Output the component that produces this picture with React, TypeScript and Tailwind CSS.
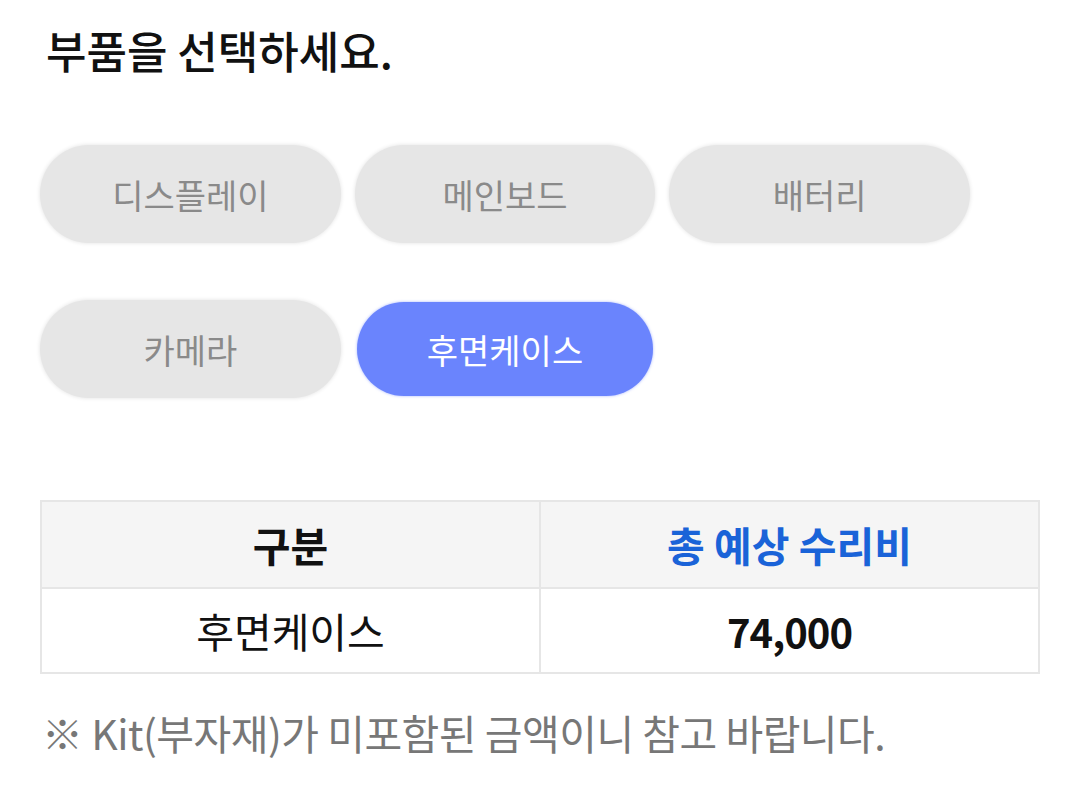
import React, { useState } from "react";

const parts = ["디스플레이", "메인보드", "배터리", "카메라", "후면케이스"];

const prices: Record<string, string> = {
    디스플레이: "312,000",
    메인보드: "450,000",
    배터리: "98,000",
    카메라: "136,000",
    후면케이스: "74,000",
};

const App: React.FC = () => {
    const [selected, setSelected] = useState<string>("후면케이스");

    return (
        <div className="min-h-screen w-full bg-white px-[40px] pt-[22px] font-['Noto_Sans_CJK_KR',sans-serif]">
            {/* Title */}
            <h1 className="pl-[6px] text-[44px] font-medium leading-[56px] text-[#111]">부품을 선택하세요.</h1>

            {/* Part buttons */}
            <div className="mt-[67px] grid w-[930px] grid-cols-3 gap-x-[14px] gap-y-[57px]">
                {parts.map((p) => {
                    const active = p === selected;
                    return (
                        <button
                            key={p}
                            onClick={() => setSelected(p)}
                            className={`flex items-center justify-center rounded-full text-[34px] ${
                                active
                                    ? "mx-[2px] my-[2px] h-[94px] bg-[#6a84fd] text-white shadow-[0_0_3px_rgba(106,132,253,0.6)]"
                                    : "h-[98px] bg-[#e6e6e6] text-[#8a8a8a] shadow-[0_0_4px_rgba(0,0,0,0.12)]"
                            }`}
                        >
                            {p}
                        </button>
                    );
                })}
            </div>

            {/* Price table */}
            <table className="mt-[102px] w-[1000px] table-fixed border-collapse">
                <thead>
                    <tr className="bg-[#f5f5f5]">
                        <th className="h-[87px] border-2 border-[#e6e6e6] text-[41px] font-bold text-[#111]">구분</th>
                        <th className="h-[87px] border-2 border-[#e6e6e6] text-[41px] font-bold text-[#1a63d8]">총 예상 수리비</th>
                    </tr>
                </thead>
                <tbody>
                    <tr>
                        <td className="h-[85px] border-2 border-[#e6e6e6] text-center text-[41px] text-[#111]">{selected}</td>
                        <td className="h-[85px] border-2 border-[#e6e6e6] text-center text-[40px] font-bold tracking-[-1px] text-[#111]">
                            {prices[selected]}
                        </td>
                    </tr>
                </tbody>
            </table>

            {/* Note */}
            <p className="mt-[33px] pl-[2px] text-[41px] leading-[50px] tracking-[-0.5px] text-[#777]">
                ※ Kit(부자재)가 미포함된 금액이니 참고 바랍니다.
            </p>
        </div>
    );
};

export default App;
